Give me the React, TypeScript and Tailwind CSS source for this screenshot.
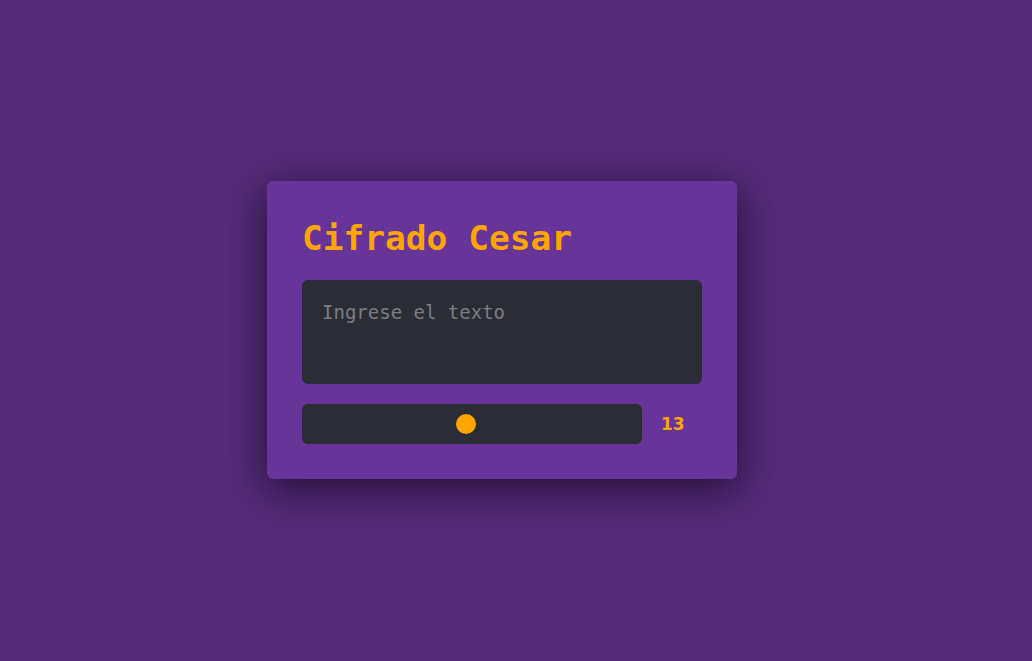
import { useState } from 'react'

export default function App() {
  const [shift, setShift] = useState(13)
  const [text, setText] = useState('')

  return (
    <div className="min-h-screen w-full bg-[#542c79] flex items-center justify-center font-['DejaVu_Sans_Mono',monospace]">
      {/* Card */}
      <div className="w-[470px] h-[298px] -ml-[28px] -mt-[2px] bg-[#673499] rounded-md px-[35px] pt-[37px] shadow-[0_10px_40px_rgba(20,5,35,0.8)]">
        <h1 className="text-[34.5px] leading-[40px] font-bold text-[#ffa500]">Cifrado Cesar</h1>
        <textarea
          value={text}
          onChange={(e) => setText(e.target.value)}
          placeholder="Ingrese el texto"
          className="mt-[22px] block w-[400px] h-[104px] resize-none rounded-md bg-[#2a2d36] px-5 py-5 text-[19px] leading-[24px] text-gray-200 placeholder:text-[#7a7c82] outline-none"
        />
        <div className="mt-5 flex items-center">
          <input
            type="range"
            min={1}
            max={26}
            value={shift}
            onChange={(e) => setShift(Number(e.target.value))}
            className="w-[340px] h-10 rounded-md bg-[#2a2d36] appearance-none outline-none cursor-pointer [&::-webkit-slider-thumb]:appearance-none [&::-webkit-slider-thumb]:w-5 [&::-webkit-slider-thumb]:h-5 [&::-webkit-slider-thumb]:rounded-full [&::-webkit-slider-thumb]:bg-[#ffa500] [&::-moz-range-thumb]:w-5 [&::-moz-range-thumb]:h-5 [&::-moz-range-thumb]:border-0 [&::-moz-range-thumb]:rounded-full [&::-moz-range-thumb]:bg-[#ffa500]"
          />
          <span className="ml-[19px] mt-[3px] text-[17px] font-bold text-[#ffa500] font-['DejaVu_Sans',sans-serif]">{shift}</span>
        </div>
      </div>
    </div>
  )
}
